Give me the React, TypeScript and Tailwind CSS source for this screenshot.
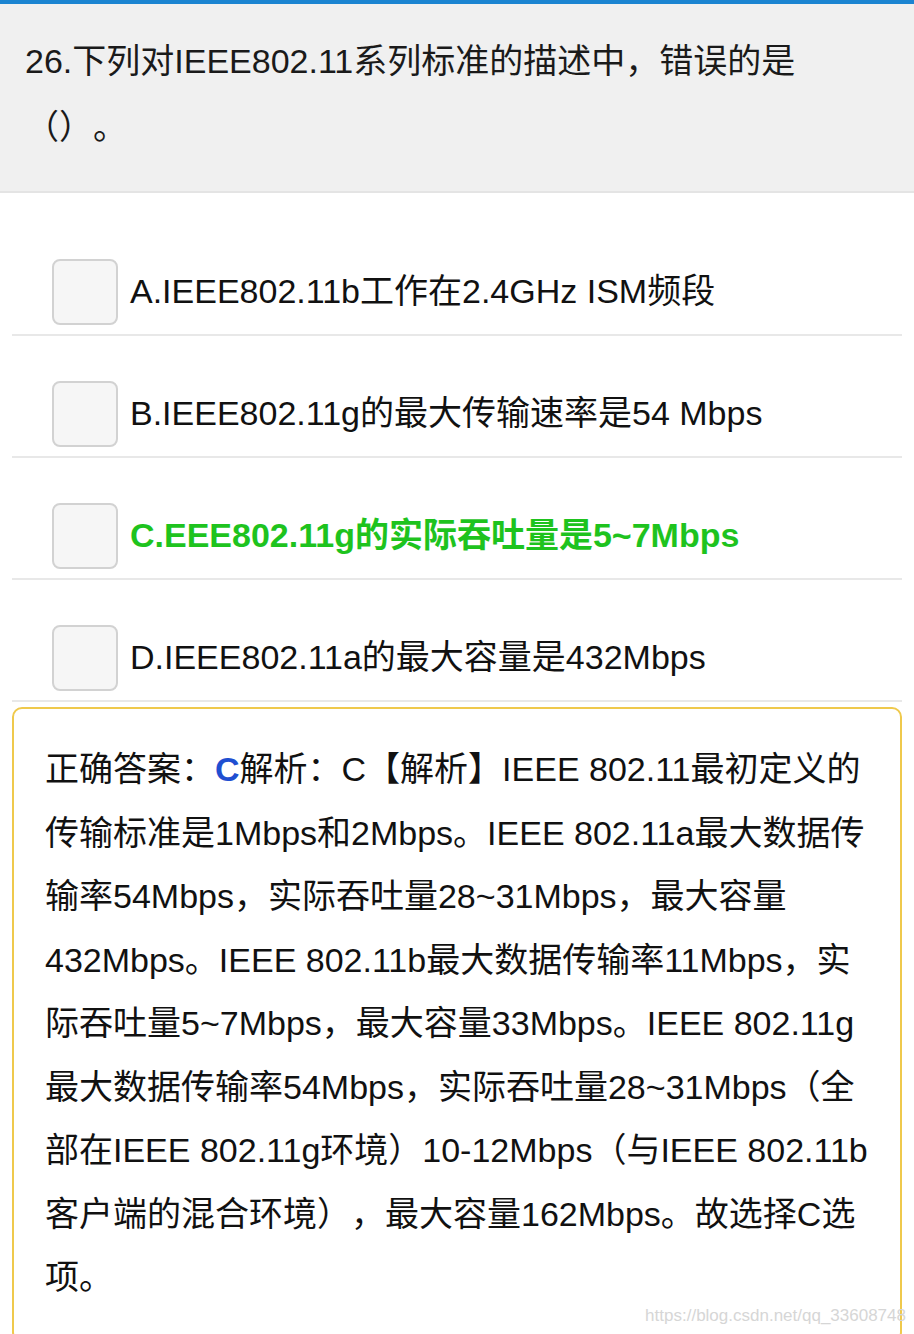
import React from "react";

const font = { fontFamily: '"Liberation Sans", "Noto Sans CJK SC", sans-serif' };

type Opt = { text: string; correct?: boolean };

const options: Opt[] = [
  { text: "A.IEEE802.11b工作在2.4GHz ISM频段" },
  { text: "B.IEEE802.11g的最大传输速率是54 Mbps" },
  { text: "C.EEE802.11g的实际吞吐量是5~7Mbps", correct: true },
  { text: "D.IEEE802.11a的最大容量是432Mbps" },
];

const answerLines = [
  "传输标准是1Mbps和2Mbps。IEEE 802.11a最大数据传",
  "输率54Mbps，实际吞吐量28~31Mbps，最大容量",
  "432Mbps。IEEE 802.11b最大数据传输率11Mbps，实",
  "际吞吐量5~7Mbps，最大容量33Mbps。IEEE 802.11g",
  "最大数据传输率54Mbps，实际吞吐量28~31Mbps（全",
  "部在IEEE 802.11g环境）10-12Mbps（与IEEE 802.11b",
  "客户端的混合环境），最大容量162Mbps。故选择C选",
  "项。",
];

export default function App() {
  return (
    <div
      className="relative h-[1334px] w-full overflow-hidden bg-white text-[#111] [text-spacing-trim:space-all]"
      style={font}
    >
      <div className="h-[4px] bg-[#1b84d1]" />
      <div className="h-[189px] border-b-2 border-[#e4e4e4] bg-[#f0f0f0] pl-[25px] pt-[24px] text-[34px] leading-[66px] text-[#1a1a1a]">
        <div className="whitespace-nowrap">26.下列对IEEE802.11系列标准的描述中，错误的是</div>
        <div className="whitespace-nowrap">（）。</div>
      </div>
      <div className="px-[12px] pt-[21px]">
        {options.map((o) => (
          <div
            key={o.text}
            className="flex items-center gap-[12px] border-b-2 border-[#e8e8e8] pb-[9px] pl-[40px] pt-[45px]"
          >
            <div className="h-[66px] w-[66px] shrink-0 rounded-[8px] border-2 border-[#d2d2d2] bg-[#f6f6f6]" />
            <div
              className={
                o.correct
                  ? "mt-[-3px] whitespace-nowrap text-[34px] font-bold leading-[40px] text-[#1ec31e]"
                  : "mt-[-3px] whitespace-nowrap text-[34px] leading-[40px] text-[#111]"
              }
            >
              {o.text}
            </div>
          </div>
        ))}
      </div>
      <div className="mx-[12px] mt-[5px] rounded-[10px] border-2 border-[#efc94c] pb-[30px] pl-[31px] pr-[20px] pt-[29px] text-[34px] leading-[63.5px] text-[#111]">
        <div className="whitespace-nowrap">
          正确答案：<span className="font-bold text-[#1f4fd1]">C</span>解析：C【解析】IEEE 802.11最初定义的
        </div>
        {answerLines.map((l) => (
          <div key={l} className="whitespace-nowrap">
            {l}
          </div>
        ))}
      </div>
      <div className="absolute bottom-[6px] right-[8px] whitespace-nowrap text-[17px] text-[#d6d6d6]">
        https://blog.csdn.net/qq_33608748
      </div>
    </div>
  );
}
